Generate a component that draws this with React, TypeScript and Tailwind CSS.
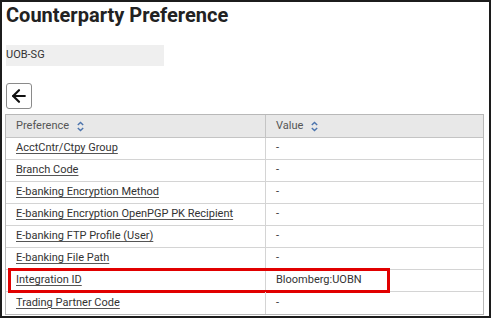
import { ArrowLeft } from 'lucide-react'

const rows = [
  { name: 'AcctCntr/Ctpy Group', value: '-' },
  { name: 'Branch Code', value: '-' },
  { name: 'E-banking Encryption Method', value: '-' },
  { name: 'E-banking Encryption OpenPGP PK Recipient', value: '-' },
  { name: 'E-banking FTP Profile (User)', value: '-' },
  { name: 'E-banking File Path', value: '-' },
  { name: 'Integration ID', value: 'Bloomberg:UOBN', highlight: true },
  { name: 'Trading Partner Code', value: '-' },
]

function SortIcon() {
  return (
    <svg width="9" height="11" viewBox="0 0 9 11" className="ml-[7px]">
      <path d="M1.8 4 L4.5 1.4 L7.2 4" fill="none" stroke="#4c74ad" strokeWidth="1.4" />
      <path d="M1.8 7 L4.5 9.6 L7.2 7" fill="none" stroke="#4c74ad" strokeWidth="1.4" />
    </svg>
  )
}

export default function App() {
  return (
    <div
      className="w-[491px] h-[318px] border-2 border-[#1c1c1c] bg-white pl-1 overflow-hidden"
      style={{ fontFamily: 'Roboto, "Liberation Sans", sans-serif' }}
    >
      <h1 className="text-[20px] font-bold leading-[24px] text-[#222] mt-[1px]">Counterparty Preference</h1>

      <div className="mt-[18px] w-[158px] h-[21px] bg-[#efefef] flex items-center text-[11px] text-[#333]">
        UOB-SG
      </div>

      <button className="mt-[17px] w-[26px] h-[26px] border border-[#8a8a8a] rounded-[3px] flex items-center justify-center bg-white">
        <ArrowLeft size={20} strokeWidth={2.6} color="#111" />
      </button>

      <div className="mt-[5px] -ml-[1px] w-[479px] border border-[#b8b8b8] text-[11px]">
        <div className="grid grid-cols-[260px_1fr] h-[23px] bg-[#e8e8e8] border-b border-[#c4c4c4] text-[#555]">
          <div className="flex items-center pl-[10px] border-r border-[#c4c4c4]">
            Preference
            <SortIcon />
          </div>
          <div className="flex items-center pl-[10px]">
            Value
            <SortIcon />
          </div>
        </div>
        {rows.map((r, i) => (
          <div
            key={r.name}
            className={
              'relative grid grid-cols-[260px_1fr] h-[22px] ' +
              (i < rows.length - 1 ? 'border-b border-[#d4d4d4]' : '')
            }
          >
            <div className="flex items-center pl-[10px] border-r border-[#d4d4d4]">
              <a href="#" className="text-[#333] underline underline-offset-2 decoration-[#555]">
                {r.name}
              </a>
            </div>
            <div className="flex items-center pl-[10px] text-[#333]">{r.value}</div>
            {r.highlight && (
              <div className="absolute left-[2px] top-[-2px] w-[382px] h-[25px] border-[3px] border-[#e10000]" />
            )}
          </div>
        ))}
      </div>
    </div>
  )
}
